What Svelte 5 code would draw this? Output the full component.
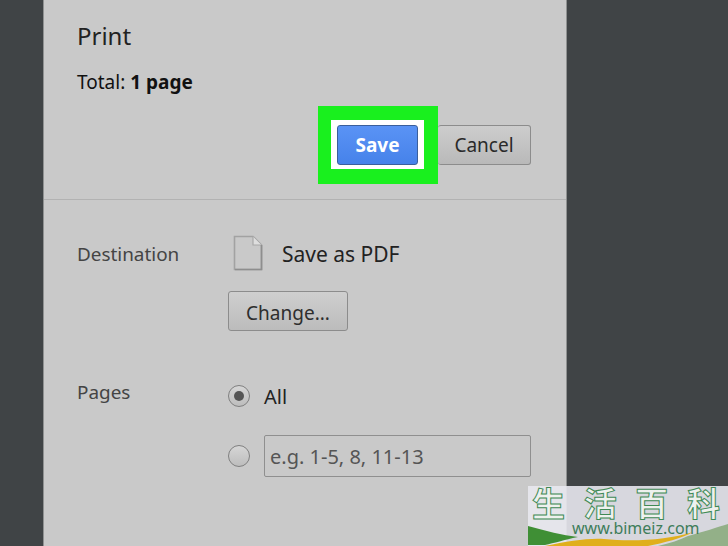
<script>
	let pages = $state('all');
</script>

<div class="page">
	<div class="panel">
		<header class="top">
			<h1>Print</h1>
			<p class="total">Total: <b>1 page</b></p>
			<div class="actions">
				<div class="highlight">
					<div class="frame">
						<button class="btn save">Save</button>
					</div>
				</div>
				<button class="btn cancel">Cancel</button>
			</div>
		</header>

		<section class="row dest">
			<div class="label">Destination</div>
			<div class="body">
				<div class="printer">
					<svg width="30" height="36" viewBox="0 0 30 36">
						<path d="M1.5 1.5H20L28.5 10V34.5H1.5Z" fill="#c9c9c9" stroke="#a2a2a2" stroke-width="1.6" />
						<path d="M20 1.5V10H28.5" fill="#dedede" stroke="#a8a8a8" stroke-width="1.2" />
						<path d="M2 34.5H28.5V10" fill="none" stroke="#8e8e8e" stroke-width="1.6" />
					</svg>
					<span>Save as PDF</span>
				</div>
				<button class="btn change">Change...</button>
			</div>
		</section>

		<section class="row pages">
			<div class="label">Pages</div>
			<div class="body">
				<div class="option">
					<button class="radio" class:on={pages === 'all'} aria-label="All" onclick={() => (pages = 'all')}></button>
					<span>All</span>
				</div>
				<div class="option">
					<button class="radio" class:on={pages === 'range'} aria-label="Range" onclick={() => (pages = 'range')}></button>
					<input type="text" placeholder="e.g. 1-5, 8, 11-13" />
				</div>
			</div>
		</section>
	</div>

	<div class="mark">
		<svg class="swoosh" width="200" height="30" viewBox="0 0 200 30">
			<path d="M0 10C18 15 34 19 50 21C36 24 26 27 17 29H0Z" fill="#3f8f35" />
			<path d="M17 30C40 25 60 22 76 23C105 26 140 24 165 16C155 22 135 27 120 30Z" fill="#e0af1c" />
			<path d="M160 20C175 16 190 11 200 8V30H130C142 27 152 24 160 20Z" fill="#93b088" />
		</svg>
		<div class="zh"><span>生</span><span>活</span><span>百</span><span>科</span></div>
		<div class="url">www.bimeiz.com</div>
	</div>
</div>

<style>
	:global(body) {
		margin: 0;
		background: #404446;
	}

	.page {
		position: relative;
		width: 728px;
		height: 546px;
		overflow: hidden;
		background: #404446;
		font-family: "Noto Sans", "Open Sans", sans-serif;
		color: #1c1c1c;
	}

	.panel {
		box-sizing: border-box;
		margin-left: 43px;
		width: 524px;
		height: 546px;
		background: #c9c9c9;
		border-left: 1px solid #8f9191;
		border-right: 1px solid #8f9191;
	}

	.top {
		box-sizing: border-box;
		height: 200px;
		padding: 20px 35px 0 33px;
		border-bottom: 1px solid #b2b2b2;
	}

	h1 {
		margin: 0;
		font-size: 24px;
		font-weight: 400;
		line-height: 31px;
		color: #222;
	}

	.total {
		margin: 19px 0 0;
		font-size: 19px;
		line-height: 24px;
		color: #111;
	}

	.total b {
		font-weight: 700;
	}

	.actions {
		display: flex;
		justify-content: flex-end;
		align-items: center;
		margin-top: 12px;
	}

	.btn {
		box-sizing: border-box;
		font-family: inherit;
		font-size: 20px;
		border-radius: 3px;
		padding: 0;
		cursor: pointer;
	}

	.highlight {
		box-sizing: border-box;
		width: 120px;
		height: 78px;
		background: #19f01e;
		padding: 14px 14px 15px 13px;
	}

	.frame {
		background: #fff;
		padding: 5px 6px 4px 6px;
	}

	.save {
		display: block;
		width: 81px;
		height: 40px;
		border: 1px solid #3a5f9c;
		background: linear-gradient(#5a93f5, #4682ea);
		color: #fff;
		font-weight: 700;
		font-size: 19px;
	}

	.cancel {
		width: 93px;
		height: 40px;
		border: 1px solid #8c8c8c;
		border-left: none;
		background: linear-gradient(#cdcdcd, #b9b9b9);
		color: #2a2a2a;
		font-size: 19px;
	}

	.row {
		display: flex;
		padding-left: 33px;
	}

	.label {
		width: 151px;
		font-size: 18.9px;
		line-height: 24px;
		color: #444;
	}

	.dest {
		padding-top: 42px;
	}

	.body {
		flex: 1;
	}

	.printer {
		display: flex;
		align-items: center;
		gap: 19px;
		margin: -7px 0 0 5px;
		height: 36px;
		font-size: 21px;
		color: #222;
	}

	.printer span {
		position: relative;
		top: 1px;
	}

	.change {
		display: block;
		width: 120px;
		height: 40px;
		margin-top: 20px;
		border: 1px solid #8c8c8c;
		background: linear-gradient(#cfcfcf, #bcbcbc);
		color: #2e2e2e;
		font-size: 19px;
		line-height: 42px;
	}

	.pages {
		padding-top: 49px;
	}

	.option {
		display: flex;
		align-items: center;
		gap: 14px;
		height: 42px;
		margin-bottom: 17px;
		font-size: 20px;
		color: #222;
	}

	.option:first-child {
		height: 24px;
		margin-top: 4px;
		margin-bottom: 27px;
	}

	.radio {
		box-sizing: border-box;
		width: 22px;
		height: 22px;
		padding: 0;
		border: 1px solid #808080;
		border-radius: 50%;
		background: linear-gradient(#d6d6d6, #bdbdbd);
		display: grid;
		place-items: center;
		cursor: pointer;
	}

	.radio.on::after {
		content: "";
		width: 10px;
		height: 10px;
		border-radius: 50%;
		background: #555;
	}

	input {
		box-sizing: border-box;
		width: 267px;
		height: 42px;
		padding: 0 5px;
		border: 1px solid #8f8f8f;
		border-radius: 2px;
		background: #c9c9c9;
		font-family: inherit;
		font-size: 20px;
		color: #333;
	}

	input::placeholder {
		color: #555;
		opacity: 1;
	}

	.mark {
		position: absolute;
		left: 528px;
		top: 486px;
		width: 200px;
		height: 60px;
		background: rgba(232, 232, 238, 0.9);
	}

	.zh {
		position: relative;
		display: flex;
		justify-content: space-between;
		width: 188px;
		padding: 0 0 0 4px;
		font-family: "Noto Sans CJK SC", sans-serif;
		font-size: 33px;
		line-height: 33px;
		font-weight: 700;
		color: #eef1ee;
		-webkit-text-stroke: 1px #3f8a55;
	}

	.url {
		position: absolute;
		left: 44px;
		top: 32px;
		font-size: 16px;
		line-height: 20px;
		color: #3e7d5a;
	}

	.swoosh {
		position: absolute;
		left: 0;
		bottom: 0;
	}
</style>
